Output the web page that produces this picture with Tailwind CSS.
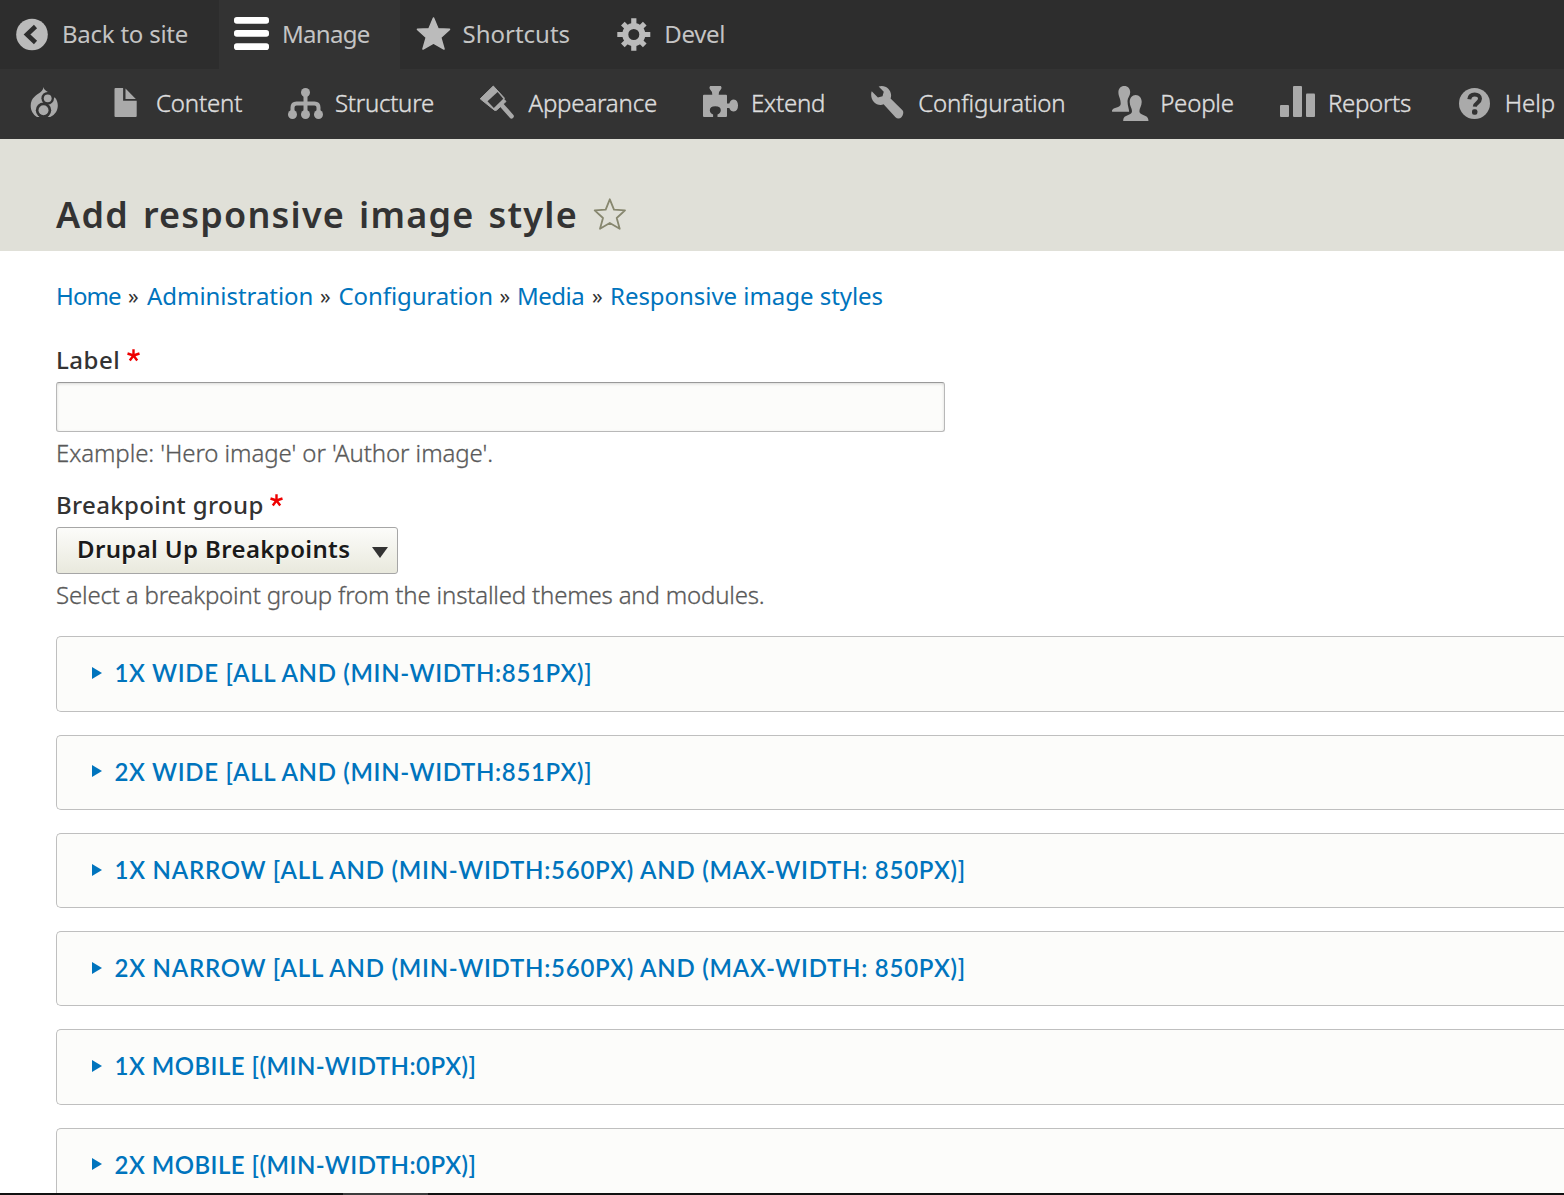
<!DOCTYPE html>
<html lang="en">
<head>
<meta charset="utf-8">
<title>Add responsive image style</title>
<script src="https://cdn.jsdelivr.net/npm/@tailwindcss/browser@4"></script>
</head>
<body class="flex h-[1195px] w-[1564px] flex-col overflow-hidden bg-white font-['Noto_Sans','Open_Sans',sans-serif] text-2xl/8 text-[#333]">

<!-- Toolbar bar -->
<nav class="flex h-[69px] shrink-0 whitespace-nowrap bg-[#2d2d2d] text-[#c4c4c4]">
  <a class="flex w-[219px] items-center pl-[14px]">
    <svg class="mr-[12px] h-[69px] w-[36px] shrink-0" viewBox="14 0 36 69"><circle cx="32" cy="34.5" r="15.8" fill="#bbb"/><path d="M35.5 26.5 27 34.5l8.500 8" fill="none" stroke="#2d2d2d" stroke-width="4.600"/></svg>
    <span class="pb-0.5 tracking-[-0.24px]">Back to site</span>
  </a>
  <a class="flex w-[181px] items-center bg-[#333] pl-[13px]">
    <svg class="mr-[10px] h-[69px] w-[40px] shrink-0" viewBox="232 0 40 69" fill="#fff"><rect x="234" y="17" width="35" height="6.800" rx="2.800"/><rect x="234" y="30" width="35" height="6.800" rx="2.800"/><rect x="234" y="43.200" width="35" height="6.800" rx="2.800"/></svg>
    <span class="pb-0.5 tracking-[-0.7px]">Manage</span>
  </a>
  <a class="flex w-[216px] items-center pl-[15px]">
    <svg class="mr-[11.500px] h-[69px] w-[36px] shrink-0" viewBox="415 0 36 69"><path d="M433.500 18 438 28.800l11.500.500-8.800 8.200 3.300 11.500-10.500-6-10.500 6 3.300-11.500-8.800-8.200 11.500-.5z" fill="#bbb" stroke="#bbb" stroke-width="1.600" stroke-linejoin="round"/></svg>
    <span class="pb-0.5">Shortcuts</span>
  </a>
  <a class="flex items-center">
    <svg class="mr-[12.200px] h-[69px] w-[36px] shrink-0" viewBox="616 0 36 69"><g transform="translate(633.800 34.500)" stroke="#bbb"><circle r="8.500" fill="none" stroke-width="6"/><g stroke-width="5.200"><path d="M0-16.200v6M0 10.200v6M-16.500 0h6M10.500 0h6"/><path d="M0-15.500v6M0 9.500v6M-15.500 0h6M9.500 0h6" transform="rotate(45)"/></g></g></svg>
    <span class="pb-0.5 tracking-[-0.3px]">Devel</span>
  </a>
</nav>

<!-- Administration tray -->
<nav class="flex h-[70px] shrink-0 whitespace-nowrap bg-[#333] pl-[28px] font-light text-[#ddd] [-webkit-text-stroke:0.4px_#ddd]">
  <a class="flex w-[84px] items-center">
    <svg class="h-[70px] w-[36px] shrink-0" viewBox="28 69 36 70"><path d="M43.300 87c.6 2.500 1.800 3.300 5 5.200 5.500 3.300 9.500 6.800 9.500 13.300 0 5-2.500 9-7.600 11.600H37c-4-2.500-6.300-6.600-6.300-11.300 0-8.300 6.300-11 9.700-13.600 2.100-1.700 2.900-3.200 2.900-5.200z" fill="#aaa"/><circle cx="43.500" cy="110.300" r="7.700" fill="#333"/><circle cx="47.700" cy="98.300" r="6.300" fill="#333"/><path d="M49 91l6.500 6-2 1-7-3z" fill="#333"/><path d="M46 115l4.500 3.500h-13L41 115z" fill="#333"/><circle cx="43.500" cy="110.300" r="5" fill="#aaa"/><circle cx="47.700" cy="98.300" r="3.900" fill="#aaa"/></svg>
  </a>
  <a class="flex w-[174px] items-center">
    <svg class="mr-[16px] h-[70px] w-[28px] shrink-0" viewBox="112 69 28 70" fill="#aaa"><path d="M115.500 88h7.600v12.800h13.600v15.200a1 1 0 0 1-1 1h-20.200a1 1 0 0 1-1-1v-27a1 1 0 0 1 1-1z"/><path d="M125.500 88.500 135.800 99h-10.300z"/></svg>
    <span class="pb-0.5 tracking-[-0.16px]">Content</span>
  </a>
  <a class="flex w-[192px] items-center">
    <svg class="mr-[9px] h-[70px] w-[40px] shrink-0" viewBox="286 69 40 70" fill="#aaa"><path d="M305.500 92v22M292.500 113v-5.500q0-4 4-4h18q4 0 4 4v5.500" fill="none" stroke="#aaa" stroke-width="4"/><circle cx="305.500" cy="92.500" r="4.500"/><circle cx="292.500" cy="114.500" r="4.500"/><circle cx="305.500" cy="114.500" r="4.500"/><circle cx="318.500" cy="114.500" r="4.500"/></svg>
    <span class="pb-0.5 tracking-[-0.25px]">Structure</span>
  </a>
  <a class="flex w-[222px] items-center">
    <svg class="mr-[12.500px] h-[70px] w-[38px] shrink-0" viewBox="478 69 38 70"><path d="M480.200 98.800 493.300 86l11 12-.3 1.300 2 2.200-9.500 8.700-1.800.2z" fill="#aaa" stroke="#aaa" stroke-linejoin="round"/><path d="M487.500 101.300 497.600 92l5.700 6.700-9.500 9.300z" fill="#333"/><path d="M501.500 105l10 11.200" stroke="#aaa" stroke-width="4.600" stroke-linecap="round"/></svg>
    <span class="pb-0.5 tracking-[-0.18px]">Appearance</span>
  </a>
  <a class="flex w-[168px] items-center">
    <svg class="mr-[11px] h-[70px] w-[40px] shrink-0" viewBox="700 69 40 70"><path d="M704 94.800h8.300q.700-2.500-1.600-4.500-2.200-2.500-.5-4.300h10.600q1.700 1.800-.5 4.300-2.300 2-1.600 4.500h7.300a1 1 0 0 1 1 1v7.700h2.300q1.200-4 4.500-4 4.200.6 4.200 6.100t-4.200 6q-3.300 0-4.500-3.600H727v8a1 1 0 0 1-1 1h-8.500v-2.500q3.300-1.600 3.300-4.300 0-3.800-5.500-3.900-5.500.1-5.500 3.900 0 2.700 3.300 4.300v2.500H704a1 1 0 0 1-1-1V95.800a1 1 0 0 1 1-1z" fill="#aaa"/></svg>
    <span class="pb-0.5 tracking-[-0.2px]">Extend</span>
  </a>
  <a class="flex w-[242px] items-center">
    <svg class="mr-[12.300px] h-[70px] w-[38px] shrink-0" viewBox="868 69 38 70"><path transform="translate(871 86) scale(2.1)" fill="#aaa" d="M14.990 11.586l-5.666-5.665c.15-.449.252-.921.252-1.421 0-2.485-2.016-4.500-4.502-4.500-.505 0-.981.102-1.434.255l2.431 2.431-.588 2.196-2.196.588-2.945-2.945c-.162.464-.268.956-.268 1.475 0 2.986 2.014 5 4.500 5 .5 0 .972-.102 1.421-.251l5.667 6.165c.781.781 2.047.781 2.828 0s1.281-2.547.5-3.328z"/></svg>
    <span class="pb-0.5 tracking-[-0.15px]">Configuration</span>
  </a>
  <a class="flex w-[168px] items-center">
    <svg class="mr-[10.200px] h-[70px] w-[40px] shrink-0" viewBox="1110 69 40 70" fill="#aaa"><path d="M1124.300 86c3.600 0 5.900 2.600 5.900 6.300 0 3.500-2.700 5.500-2.700 8.600 0 4.500 1.600 8 1.600 10.800h-16.600q-.800 0-.5-1.200c1-3.500 8.500-2.500 8.700-6.500.1-5.500-2.300-7-2.300-11.700 0-3.700 2.300-6.300 5.900-6.300z"/><path d="M1135.700 95c3.600 0 6 2.900 6 7 0 4-2.300 6-2.300 9.300 0 4.500 8.800 3 9 8.700v1h-25.200v-1c.2-5.700 8.800-4.200 8.800-8.700 0-3.300-2.300-5.300-2.300-9.300 0-4.100 2.400-7 6-7z" stroke="#333" stroke-width="3" paint-order="stroke"/></svg>
    <span class="pb-0.5 tracking-[-0.2px]">People</span>
  </a>
  <a class="flex w-[178px] items-center">
    <svg class="mr-[10px] h-[70px] w-[40px] shrink-0" viewBox="1278 69 40 70" fill="#aaa"><rect x="1280" y="105" width="9" height="12" rx="1"/><rect x="1293" y="86" width="9" height="31" rx="1"/><rect x="1306" y="93.500" width="9" height="23.500" rx="1"/></svg>
    <span class="pb-0.5 tracking-[-0.32px]">Reports</span>
  </a>
  <a class="flex items-center">
    <svg class="mr-[12.800px] h-[70px] w-[36px] shrink-0" viewBox="1456 69 36 70"><circle cx="1474.500" cy="103.500" r="15.500" fill="#aaa"/><path d="M1469.300 99.300c.3-3.300 2.400-4.800 5.400-4.800s5.300 1.600 5.300 4.300c0 4-5 3.900-5.200 7.800" fill="none" stroke="#333" stroke-width="4"/><rect x="1472" y="109.300" width="5.400" height="5.400" rx="2" fill="#333"/></svg>
    <span class="pb-0.5 tracking-[-0.1px]">Help</span>
  </a>
</nav>

<!-- Page title -->
<header class="flex h-[112px] shrink-0 items-end bg-[#e0e0d8] pl-[56px]">
  <h1 class="w-[536px] whitespace-nowrap pb-[11px] text-[36px]/[50px] font-semibold tracking-[1.2px] [word-spacing:3.5px]">Add responsive image style</h1>
  <svg class="mb-[19px] h-[36px] w-[36px]" viewBox="592 197 36 36"><path d="M609.800 200.300 614 210.600l11 .8-8.300 7.600 3 10.800-9.900-5.800-9.800 5.800 3-10.800-8.300-7.600 11-.8z" fill="none" stroke="#87876f" stroke-width="1.800" stroke-linejoin="round"/></svg>
</header>

<main class="flex min-h-0 flex-1 flex-col overflow-hidden pl-[56px] pt-[29px]">
  <div class="flex h-8 shrink-0 whitespace-nowrap text-[#0074bd]">
    <a class="w-[72px] tracking-[-0.9px]">Home</a><span class="w-[19px] text-[21px] text-[#333]">»</span>
    <a class="w-[173px] tracking-[-0.05px]">Administration</a><span class="w-[18.500px] text-[21px] text-[#333]">»</span>
    <a class="w-[161px] tracking-[-0.1px]">Configuration</a><span class="w-[17.500px] text-[21px] text-[#333]">»</span>
    <a class="w-[75px] tracking-[-0.5px]">Media</a><span class="w-[18px] text-[21px] text-[#333]">»</span>
    <a class="tracking-[-0.04px]">Responsive image styles</a>
  </div>

  <label class="mt-8 flex h-8 shrink-0 font-medium"><span class="w-[70px] tracking-[0.5px]">Label</span>
    <svg class="mt-1 h-[14px] w-[15px]" viewBox="-7.500 -7.500 15 14"><path d="M0 0V-6.300M0 0-6-2M0 0 6-2M0 0-3.700 5M0 0 3.700 5" stroke="#e00" stroke-width="2.400"/></svg>
  </label>
  <input class="mt-1.5 h-[50px] w-[889px] shrink-0 rounded-[3px] border border-[#b8b8b8] border-t-[#999] bg-[#fcfcfa] shadow-[inset_0_1px_3px_rgba(0,0,0,0.14)]">
  <p class="mt-[5px] h-8 shrink-0 whitespace-nowrap font-light tracking-[-0.08px] text-[#595959] [-webkit-text-stroke:0.3px_#595959]">Example: 'Hero image' or 'Author image'.</p>

  <label class="mt-5 flex h-8 shrink-0 font-medium"><span class="w-[213px] whitespace-nowrap tracking-[0.36px]">Breakpoint group</span>
    <svg class="mt-1 h-[14px] w-[15px]" viewBox="-7.500 -7.500 15 14"><path d="M0 0V-6.300M0 0-6-2M0 0 6-2M0 0-3.700 5M0 0 3.700 5" stroke="#e00" stroke-width="2.400"/></svg>
  </label>
  <button class="mt-1.5 flex h-[47px] w-[342px] shrink-0 items-center justify-between rounded-[3px] border border-[#a6a6a6] bg-linear-to-b from-[#fcfcfa] to-[#e9e9dd] pl-[20px] pr-[9px] text-[#1a1a1a]">
    <span class="whitespace-nowrap pb-[3px] font-semibold tracking-[0.35px] [text-shadow:0_1px_#fff]">Drupal Up Breakpoints</span>
    <svg class="mt-[3px] h-[11px] w-[16px]" viewBox="0 0 16 11"><path d="M0 0h16L8 11z" fill="#333"/></svg>
  </button>
  <p class="mt-[5px] h-8 shrink-0 whitespace-nowrap font-light tracking-[-0.18px] text-[#595959] [-webkit-text-stroke:0.3px_#595959]">Select a breakpoint group from the installed themes and modules.</p>

  <div class="mt-[25.350px] flex shrink-0 flex-col gap-[23px] whitespace-nowrap font-[Lato,sans-serif] font-semibold text-[#0074bd]">
    <div class="flex h-[75.250px] items-center rounded-l-[5px] border border-r-0 border-[#bfbfbf] bg-[#fcfcfa] pl-[35px]"><svg class="mb-[1.500px] mr-[12.500px] h-[12px] w-[10px]" viewBox="0 0 10 12"><path d="M0 0l10 6-10 6z" fill="#0074bd"/></svg><span class="pb-px tracking-[0.67px]">1X WIDE [ALL AND (MIN-WIDTH:851PX)]</span></div>
    <div class="flex h-[75.250px] items-center rounded-l-[5px] border border-r-0 border-[#bfbfbf] bg-[#fcfcfa] pl-[35px]"><svg class="mb-[1.500px] mr-[12.500px] h-[12px] w-[10px]" viewBox="0 0 10 12"><path d="M0 0l10 6-10 6z" fill="#0074bd"/></svg><span class="pb-px tracking-[0.67px]">2X WIDE [ALL AND (MIN-WIDTH:851PX)]</span></div>
    <div class="flex h-[75.250px] items-center rounded-l-[5px] border border-r-0 border-[#bfbfbf] bg-[#fcfcfa] pl-[35px]"><svg class="mb-[1.500px] mr-[12.500px] h-[12px] w-[10px]" viewBox="0 0 10 12"><path d="M0 0l10 6-10 6z" fill="#0074bd"/></svg><span class="pb-px tracking-[0.76px]">1X NARROW [ALL AND (MIN-WIDTH:560PX) AND (MAX-WIDTH: 850PX)]</span></div>
    <div class="flex h-[75.250px] items-center rounded-l-[5px] border border-r-0 border-[#bfbfbf] bg-[#fcfcfa] pl-[35px]"><svg class="mb-[1.500px] mr-[12.500px] h-[12px] w-[10px]" viewBox="0 0 10 12"><path d="M0 0l10 6-10 6z" fill="#0074bd"/></svg><span class="pb-[1.500px] tracking-[0.76px]">2X NARROW [ALL AND (MIN-WIDTH:560PX) AND (MAX-WIDTH: 850PX)]</span></div>
    <div class="flex h-[75.250px] items-center rounded-l-[5px] border border-r-0 border-[#bfbfbf] bg-[#fcfcfa] pl-[35px]"><svg class="mb-[1.500px] mr-[12.500px] h-[12px] w-[10px]" viewBox="0 0 10 12"><path d="M0 0l10 6-10 6z" fill="#0074bd"/></svg><span class="pb-px tracking-[0.48px]">1X MOBILE [(MIN-WIDTH:0PX)]</span></div>
    <div class="flex h-[75.250px] items-center rounded-l-[5px] border border-r-0 border-[#bfbfbf] bg-[#fcfcfa] pl-[35px]"><svg class="mb-[1.500px] mr-[12.500px] h-[12px] w-[10px]" viewBox="0 0 10 12"><path d="M0 0l10 6-10 6z" fill="#0074bd"/></svg><span class="pb-px tracking-[0.48px]">2X MOBILE [(MIN-WIDTH:0PX)]</span></div>
  </div>
</main>

<!-- Window edge -->
<div class="flex h-0.5 shrink-0 bg-[#111] pl-[343px]"><div class="w-[85px] bg-[#3c3c3c]"></div></div>
</body>
</html>
